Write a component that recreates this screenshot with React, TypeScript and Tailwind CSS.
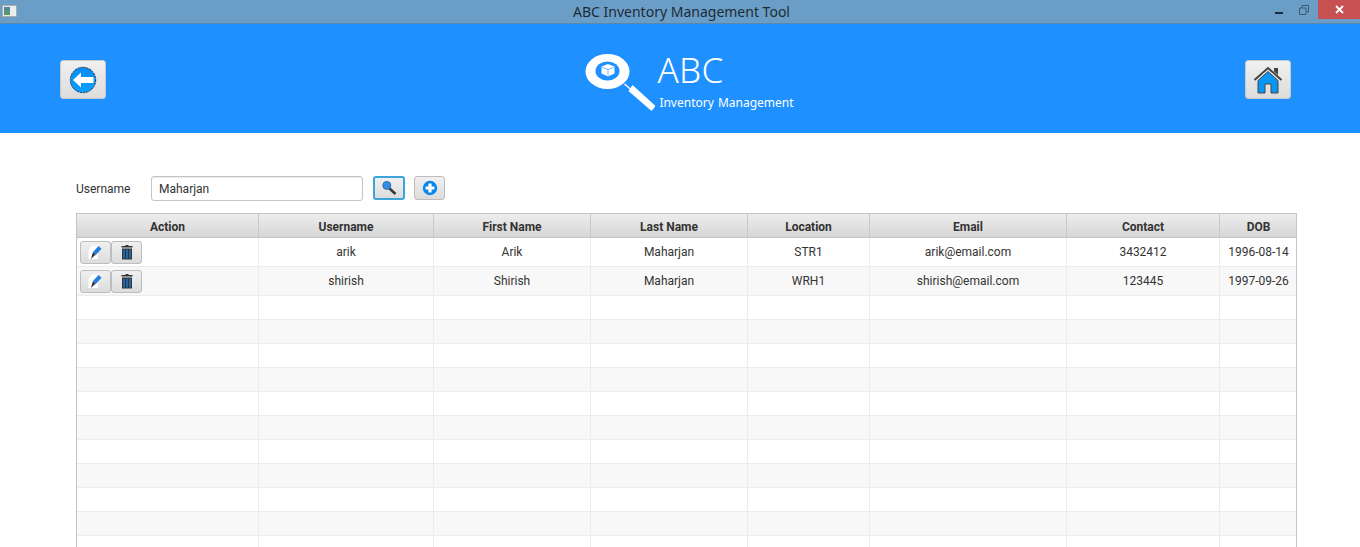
import React from "react";

const gridCols = "grid grid-cols-[182px_175px_157px_157px_122px_197px_153px_77px]";
const columns = ["Action", "Username", "First Name", "Last Name", "Location", "Email", "Contact", "DOB"];

const users = [
  ["arik", "Arik", "Maharjan", "STR1", "arik@email.com", "3432412", "1996-08-14"],
  ["shirish", "Shirish", "Maharjan", "WRH1", "shirish@email.com", "123445", "1997-09-26"],
];

const BackIcon = () => (
  <svg width="28" height="28" viewBox="0 0 28 28">
    <defs>
      <linearGradient id="blueFill" x1="0" y1="0" x2="0" y2="1">
        <stop offset="0" stopColor="#0a8cf0" />
        <stop offset="1" stopColor="#0aa0ff" />
      </linearGradient>
    </defs>
    <circle cx="14" cy="14" r="12.7" fill="url(#blueFill)" stroke="#234" strokeWidth="1" strokeDasharray="2 1" />
    <path d="M4 14 L12 6.5 V11 H24.5 V17 H12 V21.5 Z" fill="#fff" />
  </svg>
);

const HomeIcon = () => (
  <svg width="30" height="30" viewBox="0 0 30 30">
    <path d="M1.5 15 L15 3 L28.5 15" fill="none" stroke="#444" strokeWidth="2" />
    <path d="M21 3 H25 V10 L21 6.5 Z" fill="#444" />
    <path d="M5 15.5 L15 6.5 L25 15.5 V28 H18 V19 H12 V28 H5 Z" fill="#0a96f5" stroke="#444" strokeWidth="1" />
  </svg>
);

const LogoIcon = () => (
  <svg width="72" height="66" viewBox="0 0 72 66">
    <ellipse cx="24.5" cy="21.5" rx="22" ry="17.5" fill="#fff" />
    <ellipse cx="24.5" cy="21" rx="12" ry="9.5" fill="#1e90ff" />
    <path d="M25 14 L31.5 16.5 V23.5 L25 26.5 L18.5 23.5 V16.5 Z" fill="#fff" />
    <path d="M19 17 L25 19.5 L31 17 M25 19.5 V26" fill="none" stroke="#1e90ff" strokeWidth="0.6" />
    <path d="M41.5 34 L48.5 40" stroke="#fff" strokeWidth="1.5" />
    <path d="M49.5 35 L72.5 56 L68.5 61 L45.5 41 Z" fill="#fff" />
  </svg>
);

const SearchIcon = () => (
  <svg width="16" height="16" viewBox="0 0 16 16">
    <path d="M8 8 L14.5 14" stroke="#3a3a3a" strokeWidth="2.6" />
    <circle cx="5.8" cy="5.4" r="4" fill="#2f8fe8" stroke="#3b6ea5" strokeWidth="1" />
  </svg>
);

const PlusIcon = () => (
  <svg width="16" height="16" viewBox="0 0 16 16">
    <circle cx="8" cy="8" r="7.2" fill="#0a86ea" />
    <path d="M8 3.6 V12.4 M3.6 8 H12.4" stroke="#fff" strokeWidth="3.2" />
  </svg>
);

const EditIcon = () => (
  <svg width="16" height="16" viewBox="0 0 16 16" className="-ml-[2px]">
    <path d="M1.5 6 L5.5 1.5 H11 V15 H1.5 Z" fill="#fff" />
    <path d="M6 8 L11.5 2 L14.5 4.8 L8.8 11 Z" fill="#1f7fe0" />
    <path d="M6 8 L8.8 11 L7.5 11.5 L4 15 L5.5 9.5 Z" fill="#333" />
  </svg>
);

const TrashIcon = () => (
  <svg width="12" height="16" viewBox="0 0 12 16">
    <path d="M4.5 1 H7.5 V2 H11.5 V3.5 H0.5 V2 H4.5 Z" fill="#333" />
    <rect x="1" y="4.5" width="10" height="11" fill="#333" />
    <path d="M3 5.5 V14.5 M6 5.5 V14.5 M9 5.5 V14.5" stroke="#1a8cf0" strokeWidth="1.2" />
  </svg>
);

const IconButton = ({ className, children }: { className: string; children: React.ReactNode }) => (
  <button className={`flex items-center justify-center bg-gradient-to-b from-[#f0f0f0] to-[#dcdcdc] ${className}`}>
    {children}
  </button>
);

export default function App() {
  return (
    <div className="h-[547px] w-[1360px] overflow-hidden bg-white font-['Roboto',sans-serif] text-[12px] text-[#333]">
      {/* Title bar */}
      <div className="relative flex h-[24px] items-center justify-center border-b border-[#5d87a8] bg-[#6b9ec6]">
        <span className="ml-[3px] font-['Noto_Sans',sans-serif] text-[14px] leading-none text-[#1d2a35]">ABC Inventory Management Tool</span>
        <div className="absolute left-[2px] top-[5px] flex h-[12px] w-[15px] border border-[#aaa] bg-[#e8efe8] p-px">
          <div className="h-full w-[6px] bg-gradient-to-b from-[#4a86a8] to-[#5c9a5c]" />
        </div>
        <div className="absolute right-0 top-0 flex h-[19px] items-center">
          <div className="mr-[16px] mt-[6px] h-[2px] w-[8px] bg-[#1c2833]" />
          <svg width="10" height="10" viewBox="0 0 10 10" className="mr-[9px]">
            <path d="M0.5 3 H7 V9.5 H0.5 Z M3 3 V0.5 H9.5 V7 H7" fill="none" stroke="#3d5a74" />
          </svg>
          <div className="flex h-[19px] w-[42px] items-center justify-center bg-[#c75050]">
            <svg width="9" height="9" viewBox="0 0 9 9">
              <path d="M1 1 L8 8 M8 1 L1 8" stroke="#fff" strokeWidth="1.8" />
            </svg>
          </div>
        </div>
      </div>

      {/* Header */}
      <div className="relative flex h-[109px] items-center justify-between bg-[#1e90ff] pl-[60px] pr-[69px] pt-[2px]">
        <IconButton className="h-[39px] w-[46px] rounded-[3px] border border-[#c8c8c8]">
          <BackIcon />
        </IconButton>
        <div className="ml-[26px] flex items-start pt-[6px]">
          <LogoIcon />
          <div className="-mt-[1px] ml-[2px] flex flex-col font-['Noto_Sans',sans-serif] text-white">
            <span className="text-[35px] font-light leading-[42px] tracking-[0.3px]">ABC</span>
            <span className="ml-[2px] mt-[4px] text-[12px] leading-[16px] [word-spacing:1px]">Inventory Management</span>
          </div>
        </div>
        <IconButton className="h-[39px] w-[46px] rounded-[3px] border border-[#c8c8c8]">
          <HomeIcon />
        </IconButton>
      </div>

      {/* Search row */}
      <div className="ml-[76px] mt-[42px] flex h-[26px] items-center">
        <span className="w-[75px] pt-[1px]">Username</span>
        <div className="flex h-[25px] w-[212px] items-center rounded-[3px] border border-[#c4c4c4] bg-white pl-[7px] pt-[1px] shadow-[inset_0_1px_1px_#e8e8e8]">
          Maharjan
        </div>
        <IconButton className="ml-[10px] h-[24px] w-[32px] rounded-[3px] border-2 border-[#3ba5dc]">
          <SearchIcon />
        </IconButton>
        <IconButton className="ml-[9px] h-[24px] w-[31px] rounded-[3px] border border-[#bdbdbd]">
          <PlusIcon />
        </IconButton>
      </div>

      {/* Table */}
      <div className="ml-[76px] mt-[12px] w-[1221px] border-x border-t border-[#c4c4c4]">
        <div className={`${gridCols} h-[24px] border-b border-[#c4c4c4] bg-gradient-to-b from-[#ededed] to-[#d6d6d6]`}>
          {columns.map((col, i) => (
            <div key={col} className={`flex items-center justify-center pt-[2px] font-bold text-[#333] ${i < 7 ? "border-r border-[#c8c8c8]" : ""}`}>
              {col}
            </div>
          ))}
        </div>
        {users.map((user, r) => (
          <div key={user[0]} className={`${gridCols} h-[29px] border-b border-[#ececec] ${r % 2 ? "bg-[#f8f8f8]" : "bg-white"}`}>
            <div className="flex items-center border-r border-[#ececec] pl-[3px]">
              <IconButton className="h-[23px] w-[31px] rounded-[3px] border border-[#bdbdbd]">
                <EditIcon />
              </IconButton>
              <IconButton className="h-[23px] w-[31px] rounded-[3px] border border-[#bdbdbd]">
                <TrashIcon />
              </IconButton>
            </div>
            {user.map((val, i) => (
              <div key={i} className={`flex items-center justify-center ${i < 6 ? "border-r border-[#ececec]" : ""}`}>
                {val}
              </div>
            ))}
          </div>
        ))}
        {Array.from({ length: 11 }).map((_, r) => (
          <div key={r} className={`${gridCols} h-[24px] border-b border-[#ececec] ${r % 2 ? "bg-[#f8f8f8]" : "bg-white"}`}>
            {columns.map((col, i) => (
              <div key={col} className={i < 7 ? "border-r border-[#ececec]" : ""} />
            ))}
          </div>
        ))}
      </div>
    </div>
  );
}
